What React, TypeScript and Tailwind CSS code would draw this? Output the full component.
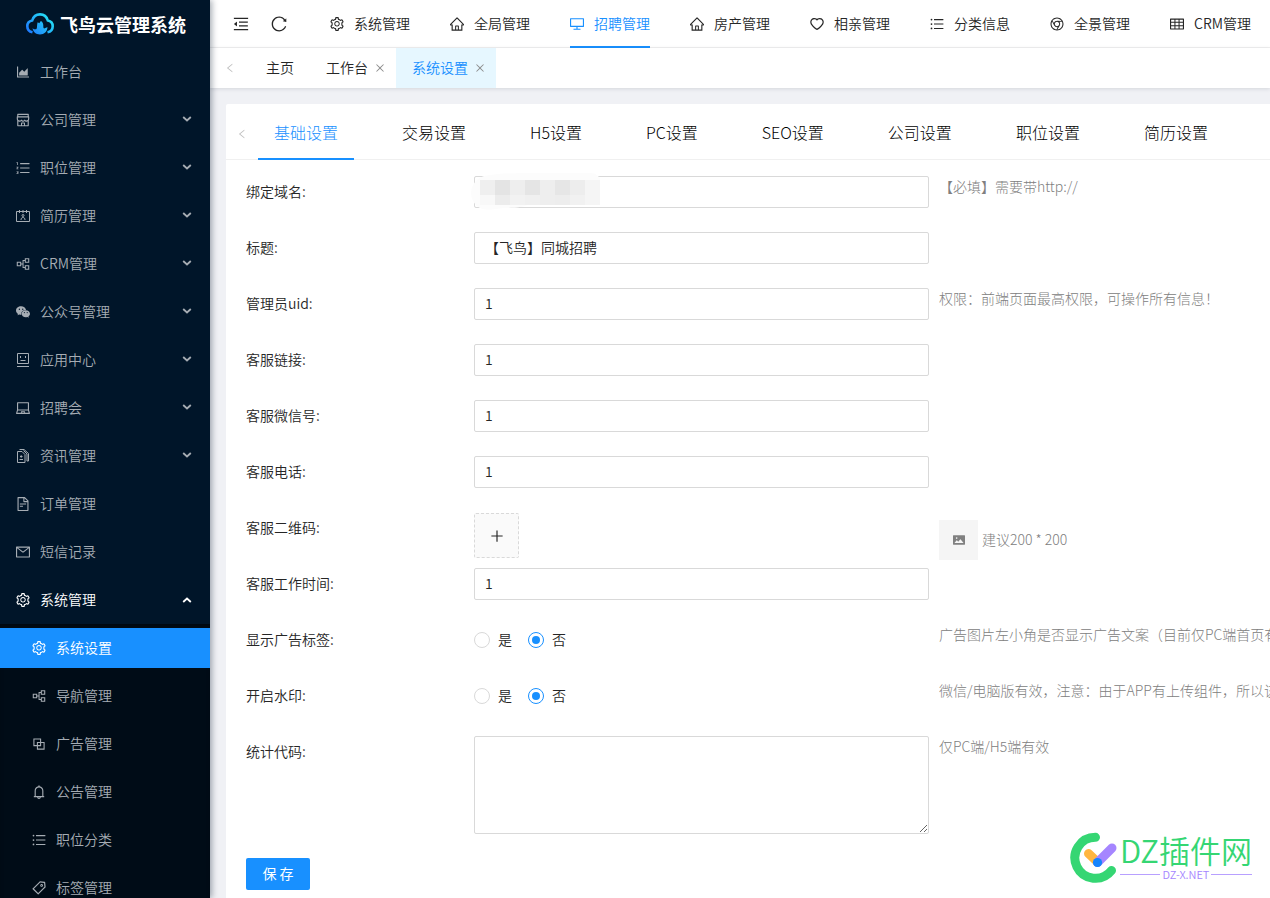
import { useState } from "react";
import type { ReactNode } from "react";
import type { IconType } from "react-icons";
import {
  AiOutlineAreaChart,
  AiOutlineShop,
  AiOutlineOrderedList,
  AiOutlinePartition,
  AiFillWechat,
  AiOutlineLaptop,
  AiOutlineFileText,
  AiOutlineMail,
  AiOutlineSetting,
  AiOutlineBlock,
  AiOutlineBell,
  AiOutlineUnorderedList,
  AiOutlineTag,
  AiOutlineMenuFold,
  AiOutlineReload,
  AiOutlineHome,
  AiOutlineDesktop,
  AiOutlineHeart,
  AiOutlineChrome,
  AiOutlineTable,
  AiOutlineClose,
  AiOutlineLeft,
  AiOutlinePlus,
  AiFillPicture,
} from "react-icons/ai";

// crops the empty margin that the ant icons carry
function Icon({ as: As, size = 14 }: { as: IconType; size?: number }) {
  return <As size={size} viewBox="64 64 896 896" className="shrink-0" />;
}

function ResumeIcon() {
  return (
    <svg viewBox="0 0 14 14" width="14" height="14" fill="none" stroke="currentColor">
      <path d="M.5 2.500h13v10H.5zM3.500 1v3M7 1v3M10.500 1v3" />
      <circle cx="7" cy="6.500" r="1" />
      <path d="M5 11c0-1.700.8-2.500 2-2.500s2 .8 2 2.500" />
    </svg>
  );
}

function AppCenterIcon() {
  return (
    <svg viewBox="0 0 14 14" width="14" height="14" fill="none" stroke="currentColor">
      <path d="M1.500.5h11v10h-11zM1 13.500h12" />
      <path d="M4.500 3v2M9.500 3v2M4.500 7.500h5" />
    </svg>
  );
}

function NewsIcon() {
  return (
    <svg viewBox="0 0 14 14" width="14" height="14" fill="none" stroke="currentColor">
      <path d="M1.500 2.500h4.500l3 3v8H1.500z" />
      <path d="M3.500.5H8L12.500 4.500v7.500H11V5L7.500 1.500" />
      <path d="M3.500 10.500h3.500M4 7.500h2.500M5.200 6.200v2.600" />
    </svg>
  );
}

function Chevron({ up }: { up?: boolean }) {
  return (
    <svg
      viewBox="0 0 10 6"
      width="10"
      height="6"
      fill="none"
      stroke="currentColor"
      strokeWidth="1.800"
      className={up ? "ml-auto" : "mb-0.5 ml-auto"}
    >
      <path d={up ? "M1.200 5 5 1.500 8.800 5" : "M1.200 1 5 4.500 8.800 1"} />
    </svg>
  );
}

function CloudLogo() {
  return (
    <svg viewBox="0 0 28 22" width="28" height="22" fill="none">
      <defs>
        <linearGradient id="cloud" x1="0" y1="22" x2="22" y2="0" gradientUnits="userSpaceOnUse">
          <stop stopColor="#1e6bff" />
          <stop offset="1" stopColor="#25e6f5" />
        </linearGradient>
      </defs>
      <path
        d="M6.500 19.300C3.300 18.600 1.300 16.300 1.300 13.200c0-3 2-5.100 4.900-5.700C7.300 3.800 10.200 1.400 14 1.400s6.700 2.400 7.800 6.100c2.900.6 4.900 2.700 4.900 5.700 0 3.100-2 5.400-5.200 6.100"
        stroke="url(#cloud)"
        strokeWidth="2.600"
      />
      <path
        d="M6.500 15.200c2 1.500 3.600 1.500 4.200.3.500-1 .2-4.500 1-6.300l1.600 1 1.500-2.300c2 .8 2.700 3 2.500 5.600 0 1.500.6 2.200 1.500 1.800 1-.4 1.700-1.400 2.700-1.100-.3 4.500-3.200 7.200-7.500 7.200s-6.800-2.500-7.500-6.200z"
        fill="url(#cloud)"
      />
    </svg>
  );
}

const sideMenu: { label: string; icon: ReactNode; arrow?: boolean }[] = [
  { label: "工作台", icon: <Icon as={AiOutlineAreaChart} /> },
  { label: "公司管理", icon: <Icon as={AiOutlineShop} />, arrow: true },
  { label: "职位管理", icon: <Icon as={AiOutlineOrderedList} />, arrow: true },
  { label: "简历管理", icon: <ResumeIcon />, arrow: true },
  { label: "CRM管理", icon: <Icon as={AiOutlinePartition} />, arrow: true },
  { label: "公众号管理", icon: <Icon as={AiFillWechat} />, arrow: true },
  { label: "应用中心", icon: <AppCenterIcon />, arrow: true },
  { label: "招聘会", icon: <Icon as={AiOutlineLaptop} />, arrow: true },
  { label: "资讯管理", icon: <NewsIcon />, arrow: true },
  { label: "订单管理", icon: <Icon as={AiOutlineFileText} /> },
  { label: "短信记录", icon: <Icon as={AiOutlineMail} /> },
];

const subMenu = [
  { label: "系统设置", icon: AiOutlineSetting },
  { label: "导航管理", icon: AiOutlinePartition },
  { label: "广告管理", icon: AiOutlineBlock },
  { label: "公告管理", icon: AiOutlineBell },
  { label: "职位分类", icon: AiOutlineUnorderedList },
  { label: "标签管理", icon: AiOutlineTag },
];

const topMenu = [
  { label: "系统管理", icon: AiOutlineSetting },
  { label: "全局管理", icon: AiOutlineHome },
  { label: "招聘管理", icon: AiOutlineDesktop },
  { label: "房产管理", icon: AiOutlineHome },
  { label: "相亲管理", icon: AiOutlineHeart },
  { label: "分类信息", icon: AiOutlineUnorderedList },
  { label: "全景管理", icon: AiOutlineChrome },
  { label: "CRM管理", icon: AiOutlineTable },
];

const settingTabs = [
  "基础设置",
  "交易设置",
  "H5设置",
  "PC设置",
  "SEO设置",
  "公司设置",
  "职位设置",
  "简历设置",
];

function Sidebar() {
  return (
    <aside className="relative z-10 flex w-[210px] shrink-0 flex-col overflow-hidden bg-[#001529] text-[#a6adb4] shadow-[2px_0_6px_rgba(0,21,41,0.35)]">
      <div className="flex h-12 shrink-0 items-center gap-1.5 pl-[26px]">
        <CloudLogo />
        <h1 className="text-lg font-bold text-white">飞鸟云管理系统</h1>
      </div>
      <nav className="shrink-0">
        {sideMenu.map((item) => (
          <a
            key={item.label}
            href="#"
            className="flex h-12 items-center gap-2.5 pl-4 pr-[18px] hover:text-white"
          >
            {item.icon}
            <span className="pb-0.5">{item.label}</span>
            {item.arrow && <Chevron />}
          </a>
        ))}
        <a href="#" className="flex h-12 items-center gap-2.5 pl-4 pr-[18px] text-white">
          <Icon as={AiOutlineSetting} />
          <span className="pb-0.5">系统管理</span>
          <Chevron up />
        </a>
        <div className="bg-[#000c17] shadow-[inset_0_4px_6px_-4px_rgba(0,0,0,0.6)]">
          {subMenu.map((item, i) => (
            <div key={item.label} className="py-1">
              <a
                href="#"
                className={`flex h-10 items-center gap-2.5 pl-8 ${
                  i === 0 ? "bg-[#1890ff] text-white" : "hover:text-white"
                }`}
              >
                <Icon as={item.icon} />
                <span className="pb-0.5">{item.label}</span>
              </a>
            </div>
          ))}
        </div>
      </nav>
    </aside>
  );
}

function TopBar() {
  return (
    <header className="flex h-12 shrink-0 overflow-hidden bg-white pl-3 shadow-[inset_0_-1px_0_#f0f0f0]">
      <button
        className="flex w-[38px] shrink-0 items-center justify-center"
        aria-label="收起菜单"
      >
        <Icon as={AiOutlineMenuFold} size={16} />
      </button>
      <button className="flex w-[38px] shrink-0 items-center justify-center" aria-label="刷新">
        <Icon as={AiOutlineReload} size={16} />
      </button>
      <nav className="ml-3 flex">
        {topMenu.map((item, i) => (
          <a
            key={item.label}
            href="#"
            className={`mx-5 flex h-12 shrink-0 items-center gap-2.5 ${
              i === 2 ? "text-[#1890ff] shadow-[inset_0_-2px_0_#1890ff]" : ""
            }`}
          >
            <Icon as={item.icon} />
            <span className="whitespace-nowrap pb-0.5">{item.label}</span>
          </a>
        ))}
      </nav>
    </header>
  );
}

function PageTabs() {
  return (
    <div className="relative z-[1] flex h-10 shrink-0 bg-white shadow-[0_1px_4px_rgba(0,21,41,0.12)]">
      <button className="flex w-10 items-center justify-center text-[#bfbfbf]" aria-label="向左">
        <Icon as={AiOutlineLeft} size={10} />
      </button>
      <a href="#" className="flex items-center px-4 pb-0.5">
        主页
      </a>
      <div className="flex items-center gap-1.5 pl-4 pr-2.5">
        <a href="#" className="pb-0.5">
          工作台
        </a>
        <button className="flex w-3 justify-center text-[#8c8c8c]" aria-label="关闭工作台">
          <Icon as={AiOutlineClose} size={10} />
        </button>
      </div>
      <div className="flex items-center gap-1.5 bg-[#e6f7ff] pl-4 pr-2.5 text-[#1890ff]">
        <a href="#" className="pb-0.5">
          系统设置
        </a>
        <button className="flex w-3 justify-center text-[#8c8c8c]" aria-label="关闭系统设置">
          <Icon as={AiOutlineClose} size={10} />
        </button>
      </div>
    </div>
  );
}

function FormRow({
  label,
  id,
  hint,
  children,
}: {
  label: string;
  id: string;
  hint?: ReactNode;
  children: ReactNode;
}) {
  return (
    <div className="grid min-h-8 grid-cols-[218px_minmax(0,455px)_minmax(0,1fr)] gap-x-2.5">
      <label htmlFor={id} className="leading-[30px]">
        {label}:
      </label>
      {children}
      <div className="overflow-hidden whitespace-nowrap font-light leading-5 text-[#808080]">
        {hint}
      </div>
    </div>
  );
}

function TextField({ id, value }: { id: string; value: string }) {
  const [text, setText] = useState(value);
  return (
    <input
      id={id}
      type="text"
      value={text}
      onChange={(e) => setText(e.target.value)}
      className="h-8 w-full rounded-xs border border-[#d9d9d9] bg-white px-2.5 pb-0.5 focus:border-[#40a9ff] focus:outline-none"
    />
  );
}

function YesNo({ id }: { id: string }) {
  const [value, setValue] = useState("否");
  return (
    <div className="flex h-8 items-center gap-4">
      {["是", "否"].map((option) => (
        <label key={option} className="flex items-center gap-2">
          <input
            id={option === "是" ? id : undefined}
            type="radio"
            name={id}
            checked={value === option}
            onChange={() => setValue(option)}
            className="flex size-4 appearance-none items-center justify-center rounded-full border border-[#d9d9d9] bg-white before:size-2 before:rounded-full checked:border-[#1890ff] checked:before:bg-[#1890ff]"
          />
          <span className="pb-0.5">{option}</span>
        </label>
      ))}
    </div>
  );
}

// pixelated cover that hides the bound domain
const maskRows = [
  ["#efefef", "#e4e4e4", "#eeeeee", "#e5e5e5", "#eeeeee", "#e6e6e6", "#ededed", "#f5f5f5"],
  ["#f8f8f8", "#ececec", "#f2f2f2", "#f0f0f0", "#eeeeee", "#ededed", "#f1f1f1", "#f5f5f5"],
];

function DomainMask() {
  return (
    <svg
      viewBox="0 0 134 38"
      width="134"
      height="38"
      className="pointer-events-none absolute -left-1 -top-1"
    >
      <path
        d="M14 4C28 1 50 1 70 1h50c6 0 8 3 10 5v22c-2 4-8 5-12 5H58c-6 2-12 3-24 3-8 1-18 3-24 0C-2 30-3 10 14 4z"
        fill="#fcfcfc"
      />
      {maskRows.map((row, y) =>
        row.map((fill, x) => (
          <rect
            key={`${x}-${y}`}
            x={10 + x * 15}
            y={8 + y * 15}
            width="15"
            height={y === 0 ? 15 : 10}
            fill={fill}
          />
        ))
      )}
    </svg>
  );
}

function Watermark() {
  return (
    <div className="pointer-events-none absolute bottom-3.5 right-[18px] z-20 flex items-start gap-0.5">
      <svg viewBox="0 0 48 52" width="48" height="52" fill="none" strokeLinecap="round">
        <path
          d="M25.500 5.300A20.500 20.500 0 1 0 41.500 38.500"
          stroke="#35d673"
          strokeWidth="9"
        />
        <path d="M18.500 21.500 27.500 30" stroke="#ffb640" strokeWidth="9" />
        <path d="M42 16 27.500 30.500" stroke="#a585ff" strokeWidth="9" />
        <circle cx="27.500" cy="30.500" r="4.600" fill="#1684fc" />
      </svg>
      <div className="flex flex-col">
        <span className="pt-0.5 text-[31px] leading-8 text-[#35d673]">DZ插件网</span>
        <span className="flex items-center gap-0.5 text-[11px] leading-4 text-[#a585ff]">
          <i className="h-px flex-1 bg-[#b8a0ff]" />
          DZ-X.NET
          <i className="h-px flex-1 bg-[#b8a0ff]" />
        </span>
      </div>
    </div>
  );
}

export default function App() {
  const [code, setCode] = useState("");

  return (
    <div className="relative flex h-screen overflow-hidden bg-[#f0f1f5] font-['Noto_Sans_CJK_SC',sans-serif] text-sm font-[350] text-[#262626]">
      <Sidebar />
      <div className="flex min-w-0 flex-1 flex-col">
        <TopBar />
        <PageTabs />
        <main className="min-h-0 flex-1 overflow-hidden pl-4 pt-4">
          <div className="min-h-full rounded-tl-xs bg-white">
            <div className="flex h-14 overflow-hidden text-base font-light shadow-[inset_0_-1px_0_#f0f0f0]">
              <button
                className="flex w-8 shrink-0 items-center justify-center pt-1 text-[#bfbfbf]"
                aria-label="上一页"
              >
                <Icon as={AiOutlineLeft} size={10} />
              </button>
              {settingTabs.map((tab, i) => (
                <a
                  key={tab}
                  href="#"
                  className={`mr-8 flex h-14 shrink-0 items-center px-4 ${
                    i === 0 ? "text-[#1890ff] shadow-[inset_0_-2px_0_#1890ff]" : "text-black"
                  }`}
                >
                  {tab}
                </a>
              ))}
            </div>

            <form
              onSubmit={(e) => e.preventDefault()}
              className="flex flex-col gap-6 pb-5 pl-5 pt-4"
            >
              <FormRow label="绑定域名" id="domain" hint="【必填】需要带http://">
                <div className="relative">
                  <TextField id="domain" value="" />
                  <DomainMask />
                </div>
              </FormRow>
              <FormRow label="标题" id="title">
                <TextField id="title" value="【飞鸟】同城招聘" />
              </FormRow>
              <FormRow
                label="管理员uid"
                id="uid"
                hint="权限：前端页面最高权限，可操作所有信息！"
              >
                <TextField id="uid" value="1" />
              </FormRow>
              <FormRow label="客服链接" id="link">
                <TextField id="link" value="1" />
              </FormRow>
              <FormRow label="客服微信号" id="wechat">
                <TextField id="wechat" value="1" />
              </FormRow>
              <FormRow label="客服电话" id="phone">
                <TextField id="phone" value="1" />
              </FormRow>
              <div className="-mb-4">
                <FormRow
                  label="客服二维码"
                  id="qrcode"
                  hint={
                    <div className="flex items-center gap-1 pt-2">
                      <span className="flex h-10 w-[39px] items-center justify-center bg-[#f5f5f5]">
                        <Icon as={AiFillPicture} size={12} />
                      </span>
                      <span className="pb-0.5">建议200 * 200</span>
                    </div>
                  }
                >
                  <button
                    id="qrcode"
                    type="button"
                    aria-label="上传"
                    className="mt-px flex size-[45px] items-center justify-center rounded-xs border border-dashed border-[#d9d9d9] bg-[#fafafa]"
                  >
                    <Icon as={AiOutlinePlus} />
                  </button>
                </FormRow>
              </div>
              <FormRow label="客服工作时间" id="worktime">
                <TextField id="worktime" value="1" />
              </FormRow>
              <FormRow
                label="显示广告标签"
                id="adtag"
                hint="广告图片左小角是否显示广告文案（目前仅PC端首页有"
              >
                <YesNo id="adtag" />
              </FormRow>
              <FormRow
                label="开启水印"
                id="mark"
                hint="微信/电脑版有效，注意：由于APP有上传组件，所以该"
              >
                <YesNo id="mark" />
              </FormRow>
              <FormRow label="统计代码" id="code" hint="仅PC端/H5端有效">
                <textarea
                  id="code"
                  value={code}
                  onChange={(e) => setCode(e.target.value)}
                  className="h-[98px] w-full rounded-xs border border-[#d9d9d9] px-2.5 py-1 focus:border-[#40a9ff] focus:outline-none"
                />
              </FormRow>
              <button
                type="submit"
                className="h-8 w-16 rounded-xs bg-[#1890ff] pb-0.5 font-normal text-white hover:bg-[#40a9ff]"
              >
                保 存
              </button>
            </form>
          </div>
        </main>
      </div>
      <Watermark />
    </div>
  );
}
